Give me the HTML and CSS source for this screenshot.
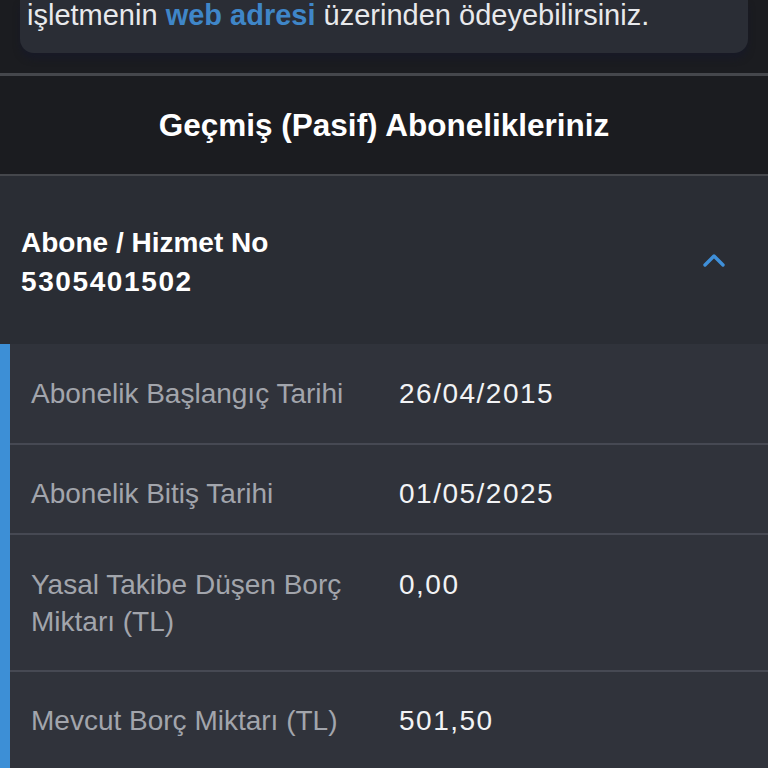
FILE: index.html
```html
<!DOCTYPE html>
<html lang="tr">
<head>
<meta charset="utf-8">
<link rel="stylesheet" href="styles.css">
</head>
<body>
<div class="page">
  <div class="notice-wrap">
    <div class="notice">
      <p class="notice-text">işletmenin <span class="link">web adresi</span> üzerinden ödeyebilirsiniz.</p>
    </div>
  </div>
  <div class="section-title">Geçmiş (Pasif) Abonelikleriniz</div>
  <div class="sub-head">
    <div class="sub-text">
      <div class="sub-label">Abone / Hizmet No</div>
      <div class="sub-num">5305401502</div>
    </div>
    <svg class="chevron" width="26" height="16" viewBox="0 0 26 16"><path d="M4 13 L13 4 L22 13" fill="none" stroke="#3f8fd8" stroke-width="3.4" stroke-linecap="round" stroke-linejoin="round"/></svg>
  </div>
  <div class="details">
    <div class="row r1"><div class="label">Abonelik Başlangıç Tarihi</div><div class="value">26/04/2015</div></div>
    <div class="row r2"><div class="label">Abonelik Bitiş Tarihi</div><div class="value">01/05/2025</div></div>
    <div class="row r3"><div class="label">Yasal Takibe Düşen Borç Miktarı (TL)</div><div class="value">0,00</div></div>
    <div class="row r4"><div class="label">Mevcut Borç Miktarı (TL)</div><div class="value">501,50</div></div>
  </div>
</div>
</body>
</html>
```
FILE: styles.css
```css
html, body {
  margin: 0;
  padding: 0;
  background: #1b1c20;
}
.page {
  width: 768px;
  height: 768px;
  overflow: hidden;
  font-family: "Liberation Sans", Arial, sans-serif;
  color: #ffffff;
}
.notice-wrap {
  padding: 0 20px;
  height: 76px;
  border-bottom: 3px solid #45474c;
  box-sizing: border-box;
}
.notice {
  background: #2a2d35;
  border-radius: 0 0 14px 14px;
  height: 53px;
  box-shadow: 0 6px 6px #181a26;
  padding-left: 7px;
}
.notice-text {
  margin: 0;
  font-size: 29px;
  line-height: 30px;
  color: #e8e9ec;
  white-space: nowrap;
}
.link {
  color: #3f86c8;
  font-weight: bold;
}
.section-title {
  height: 100px;
  box-sizing: border-box;
  border-bottom: 2px solid #45474c;
  display: flex;
  align-items: center;
  justify-content: center;
  font-weight: bold;
  font-size: 31.5px;
  background: #1b1c20;
}
.sub-head {
  background: #2a2d34;
  height: 168px;
  display: flex;
  align-items: flex-start;
  justify-content: space-between;
  padding: 47px 41px 0 21px;
  box-sizing: border-box;
}
.sub-text {
  font-weight: bold;
  font-size: 28px;
  line-height: 39px;
}
.sub-num {
  letter-spacing: 1.6px;
}
.chevron {
  align-self: center;
  margin-top: -47px;
}
.details {
  background: #30333b;
  border-left: 10px solid #3d8fd6;
}
.row {
  display: flex;
  border-bottom: 2px solid #464953;
  box-sizing: border-box;
  font-size: 28px;
  line-height: 37px;
}
.row.r1 { height: 101px; padding-top: 31px; }
.row.r2 { height: 90px; padding-top: 30px; }
.row.r3 { height: 137px; padding-top: 31px; }
.row.r4 { height: 100px; padding-top: 30px; border-bottom: none; }
.label {
  width: 368px;
  padding: 0 20px 0 21px;
  box-sizing: border-box;
  color: #a2a5ac;
}
.value {
  padding-left: 21px;
  color: #f2f3f5;
  letter-spacing: 1.5px;
}
```
